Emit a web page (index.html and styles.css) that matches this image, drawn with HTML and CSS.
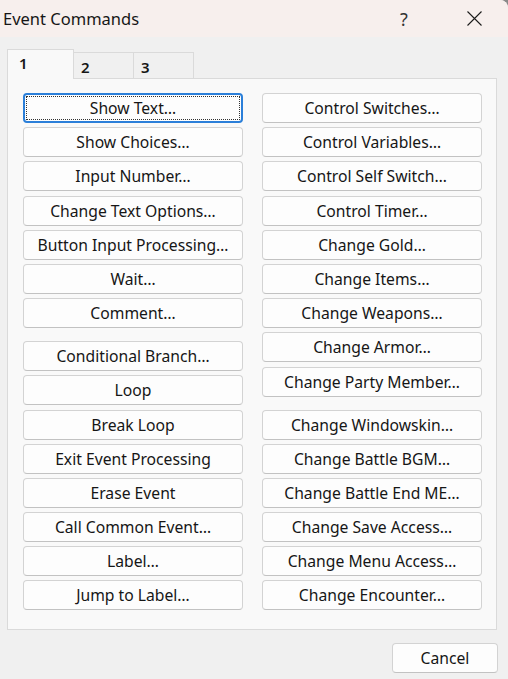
FILE: index.html
```html
<!DOCTYPE html>
<html lang="en">
<head>
  <meta charset="UTF-8" />
  <title>Event Commands</title>
  <link rel="stylesheet" href="styles.css">
</head>
<body>
  <div class="window">
    <div class="titlebar">
      <span class="title">Event Commands</span>
      <span class="caption-btn help">?</span>
      <span class="caption-btn close">
        <svg width="15" height="15" viewBox="0 0 15 15"><path d="M0.5 0.5 L14.5 14.5 M14.5 0.5 L0.5 14.5" stroke="#1c1c1c" stroke-width="1.1" fill="none"/></svg>
      </span>
    </div>
    <div class="content">
      <div class="tabs">
        <div class="tab active">1</div>
        <div class="tab">2</div>
        <div class="tab">3</div>
      </div>
      <div class="panel">
        <div class="column">
          <div class="group">
            <div class="btn focus">Show Text…</div>
            <div class="btn">Show Choices…</div>
            <div class="btn">Input Number…</div>
            <div class="btn">Change Text Options…</div>
            <div class="btn">Button Input Processing…</div>
            <div class="btn">Wait…</div>
            <div class="btn">Comment…</div>
          </div>
          <div class="group">
            <div class="btn">Conditional Branch…</div>
            <div class="btn">Loop</div>
            <div class="btn">Break Loop</div>
            <div class="btn">Exit Event Processing</div>
            <div class="btn">Erase Event</div>
            <div class="btn">Call Common Event…</div>
            <div class="btn">Label…</div>
            <div class="btn">Jump to Label…</div>
          </div>
        </div>
        <div class="column">
          <div class="group">
            <div class="btn">Control Switches…</div>
            <div class="btn">Control Variables…</div>
            <div class="btn">Control Self Switch…</div>
            <div class="btn">Control Timer…</div>
            <div class="btn">Change Gold…</div>
            <div class="btn">Change Items…</div>
            <div class="btn">Change Weapons…</div>
            <div class="btn">Change Armor…</div>
            <div class="btn">Change Party Member…</div>
          </div>
          <div class="group">
            <div class="btn">Change Windowskin…</div>
            <div class="btn">Change Battle BGM…</div>
            <div class="btn">Change Battle End ME…</div>
            <div class="btn">Change Save Access…</div>
            <div class="btn">Change Menu Access…</div>
            <div class="btn">Change Encounter…</div>
          </div>
        </div>
      </div>
      <div class="footer">
        <div class="btn cancel">Cancel</div>
      </div>
    </div>
  </div>
</body>
</html>
```

FILE: styles.css
```css
body {
  margin: 0;
  background-color: #8a8a8a;
  font-family: 'Noto Sans', 'Open Sans', sans-serif;
  color: #161616;
}
.window {
  width: 508px;
  height: 679px;
  background-color: #f0f0f0;
  border-top-right-radius: 8px;
  overflow: hidden;
}
.titlebar {
  height: 37px;
  display: flex;
  align-items: center;
  padding-left: 3px;
  background-color: #f7efed;
}
.title {
  font-size: 16.5px;
  flex: 1;
}
.caption-btn {
  width: 46px;
  height: 37px;
  display: flex;
  justify-content: center;
  align-items: center;
}
.help {
  font-size: 18px;
  color: #333;
  margin-right: 24px;
}
.close {
  margin-right: 11px;
}
.content {
  padding: 12px 10px 0 7px;
}
.tabs {
  display: flex;
  align-items: flex-end;
  height: 29px;
}
.tab {
  box-sizing: border-box;
  width: 60px;
  height: 26px;
  padding: 7px 0 0 7px;
  border: 1px solid #dadada;
  border-bottom: none;
  border-left: none;
  background-color: #f0f0f0;
  font-size: 15px;
  font-weight: 600;
  line-height: 14px;
}
.tab.active {
  width: 67px;
  height: 30px;
  padding: 6px 0 0 11px;
  margin-bottom: -1px;
  border-left: 1px solid #dadada;
  background-color: #f9f9f9;
  position: relative;
  z-index: 1;
}
.panel {
  box-sizing: border-box;
  height: 552px;
  margin-right: 1px;
  padding: 14px 15px 0 15px;
  border: 1px solid #dadada;
  background-color: #f9f9f9;
  display: grid;
  grid-template-columns: 220px 220px;
  column-gap: 19px;
  align-items: start;
}
.column {
  display: flex;
  flex-direction: column;
  gap: 13px;
}
.group {
  display: flex;
  flex-direction: column;
  gap: 4.2px;
}
.btn {
  box-sizing: border-box;
  height: 30px;
  display: flex;
  justify-content: center;
  align-items: center;
  background-color: #fdfdfd;
  border: 1px solid #d3d3d3;
  border-bottom-color: #c2c2c2;
  border-radius: 4px;
  font-size: 15.7px;
  white-space: nowrap;
  position: relative;
}
.btn.focus {
  border: 2px solid #2b7fd9;
}
.btn.focus::after {
  content: '';
  position: absolute;
  top: 1px;
  left: 1px;
  right: 1px;
  bottom: 1px;
  border: 1px dotted #333;
}
.footer {
  display: flex;
  justify-content: flex-end;
  margin-top: 13px;
}
.cancel {
  width: 106px;
}
```
